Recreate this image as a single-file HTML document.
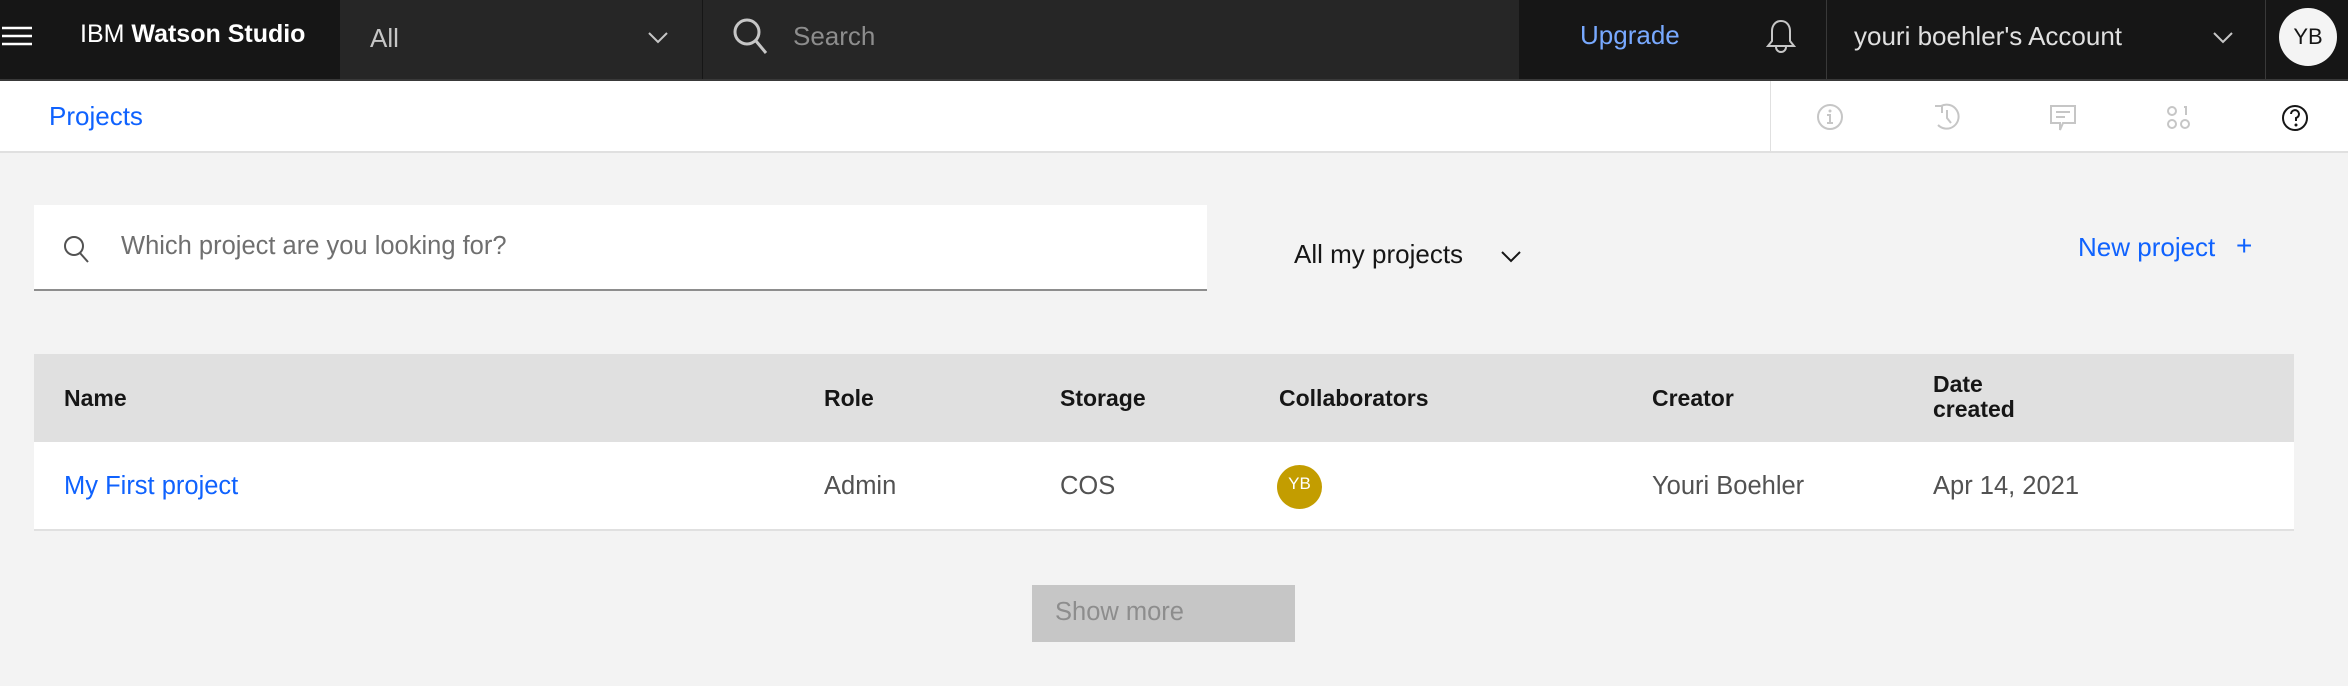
<!DOCTYPE html>
<html><head><meta charset="utf-8"><style>
*{margin:0;padding:0;box-sizing:border-box}
body{width:2348px;height:686px;background:#f3f3f3;font-family:"Liberation Sans",sans-serif;position:relative;overflow:hidden}
.a{position:absolute;white-space:nowrap}
</style></head><body>
<div class="a" style="left:0;top:0;width:2348px;height:80px;background:#161616"></div>
<div class="a" style="left:340px;top:0;width:1179px;height:80px;background:#262626"></div>
<div class="a" style="left:702px;top:0;width:1px;height:80px;background:#161616"></div>
<div class="a" style="left:1826px;top:0;width:1px;height:80px;background:#393939"></div>
<div class="a" style="left:2265px;top:0;width:1px;height:80px;background:#393939"></div>
<div class="a" style="left:0;top:79px;width:2348px;height:2px;background:#393939"></div>
<svg class="a" style="left:2px;top:24px" width="32" height="26"><g stroke="#fff" stroke-width="2.5"><line x1="0" y1="4" x2="30" y2="4"/><line x1="0" y1="12" x2="30" y2="12"/><line x1="0" y1="20" x2="30" y2="20"/></g></svg>
<div class="a" style="left:80px;top:20px;color:#fff;font-size:25px">IBM <b>Watson Studio</b></div>
<div class="a" style="left:370px;top:23px;color:#c6c6c6;font-size:26px">All</div>
<svg class="a" style="left:647px;top:30px" width="22" height="14"><path d="M2 3l9 9 9-9" stroke="#c6c6c6" stroke-width="2" fill="none"/></svg>
<svg class="a" style="left:731px;top:16px" width="42" height="42"><circle cx="16" cy="16" r="12" stroke="#c6c6c6" stroke-width="3" fill="none"/><line x1="25" y1="25" x2="35" y2="37" stroke="#c6c6c6" stroke-width="3"/></svg>
<div class="a" style="left:793px;top:21px;color:#8d8d8d;font-size:26px">Search</div>
<div class="a" style="left:1580px;top:20px;color:#78a9ff;font-size:26px">Upgrade</div>
<svg class="a" style="left:1764px;top:18px" width="34" height="38"><path d="M17 3c-6 0-9 5-9 10v10l-4 5h26l-4-5V13c0-5-3-10-9-10z" stroke="#c6c6c6" stroke-width="2" fill="none"/><path d="M12 29a5 5 0 0 0 10 0" stroke="#c6c6c6" stroke-width="2" fill="none"/></svg>
<div class="a" style="left:1854px;top:21px;color:#e0e0e0;font-size:26px">youri boehler's Account</div>
<svg class="a" style="left:2212px;top:30px" width="22" height="14"><path d="M2 3l9 9 9-9" stroke="#c6c6c6" stroke-width="2" fill="none"/></svg>
<div class="a" style="left:2279px;top:8px;width:58px;height:58px;border-radius:50%;background:#f4f4f4;color:#161616;font-size:22px;text-align:center;line-height:58px">YB</div>
<div class="a" style="left:0;top:81px;width:2348px;height:72px;background:#fff;border-bottom:2px solid #e0e0e0"></div>
<div class="a" style="left:1770px;top:81px;width:1px;height:72px;background:#e0e0e0"></div>
<div class="a" style="left:49px;top:101px;color:#0f62fe;font-size:26px">Projects</div>
<svg class="a" style="left:1815px;top:102px" width="30" height="30"><circle cx="15" cy="15" r="12" stroke="#c6c6c6" stroke-width="2" fill="none"/><circle cx="15" cy="9" r="1.5" fill="#c6c6c6"/><path d="M12 13h3v8M12 21h6" stroke="#c6c6c6" stroke-width="2" fill="none"/></svg>
<svg class="a" style="left:1932px;top:102px" width="30" height="30"><path d="M9 4A12 12 0 1 1 6 23" stroke="#c6c6c6" stroke-width="2" fill="none"/><path d="M15 8v8l4 5" stroke="#c6c6c6" stroke-width="2" fill="none"/><path d="M3 4h7v7" stroke="#c6c6c6" stroke-width="2" fill="none"/></svg>
<svg class="a" style="left:2048px;top:103px" width="30" height="30"><path d="M3 3h24v17H15l-3 7v-7H3z" stroke="#c6c6c6" stroke-width="2" fill="none"/><path d="M8 9h14M8 14h9" stroke="#c6c6c6" stroke-width="2"/></svg>
<svg class="a" style="left:2164px;top:103px" width="30" height="30"><g stroke="#c6c6c6" stroke-width="2" fill="none"><circle cx="8" cy="8" r="4"/><path d="M20 4h2v8"/><circle cx="8" cy="21" r="4"/><circle cx="21" cy="21" r="4"/></g></svg>
<svg class="a" style="left:2280px;top:103px" width="30" height="30"><circle cx="15" cy="15" r="12" stroke="#161616" stroke-width="2" fill="none"/><path d="M11 11a4 4 0 1 1 5 4v3" stroke="#161616" stroke-width="2" fill="none"/><circle cx="16" cy="22" r="1.5" fill="#161616"/></svg>
<div class="a" style="left:34px;top:205px;width:1173px;height:86px;background:#fff;border-bottom:2px solid #8d8d8d"></div>
<svg class="a" style="left:62px;top:234px" width="30" height="32"><circle cx="12" cy="12" r="9" stroke="#525252" stroke-width="2" fill="none"/><line x1="18" y1="19" x2="26" y2="28" stroke="#525252" stroke-width="2"/></svg>
<div class="a" style="left:121px;top:232px;color:#6f6f6f;font-size:25.5px">Which project are you looking for?</div>
<div class="a" style="left:1294px;top:239px;color:#161616;font-size:26px">All my projects</div>
<svg class="a" style="left:1500px;top:249px" width="22" height="14"><path d="M2 3l9 9 9-9" stroke="#161616" stroke-width="2" fill="none"/></svg>
<div class="a" style="left:2078px;top:232px;color:#0f62fe;font-size:26px">New project</div>
<div class="a" style="left:2236px;top:230px;color:#0f62fe;font-size:28px">+</div>
<div class="a" style="left:34px;top:354px;width:2260px;height:88px;background:#e0e0e0"></div>
<div class="a" style="left:34px;top:442px;width:2260px;height:89px;background:#fff;border-bottom:2px solid #e0e0e0"></div>
<div class="a" style="left:64px;top:385px;font-size:23px;font-weight:bold;color:#161616">Name</div>
<div class="a" style="left:824px;top:385px;font-size:23px;font-weight:bold;color:#161616">Role</div>
<div class="a" style="left:1060px;top:385px;font-size:23px;font-weight:bold;color:#161616">Storage</div>
<div class="a" style="left:1279px;top:385px;font-size:23px;font-weight:bold;color:#161616">Collaborators</div>
<div class="a" style="left:1652px;top:385px;font-size:23px;font-weight:bold;color:#161616">Creator</div>
<div class="a" style="left:1933px;top:372px;font-size:23px;font-weight:bold;color:#161616;line-height:25px">Date<br>created</div>
<div class="a" style="left:64px;top:472px;font-size:25.5px;color:#0f62fe">My First project</div>
<div class="a" style="left:824px;top:472px;font-size:25.5px;color:#525252">Admin</div>
<div class="a" style="left:1060px;top:472px;font-size:25.5px;color:#525252">COS</div>
<div class="a" style="left:1277px;top:465px;width:45px;height:44px;border-radius:50%;background:#c39d00;color:#fff;font-size:17px;text-align:center;line-height:38px">YB</div>
<div class="a" style="left:1652px;top:472px;font-size:25.5px;color:#525252">Youri Boehler</div>
<div class="a" style="left:1933px;top:472px;font-size:25.5px;color:#525252">Apr 14, 2021</div>
<div class="a" style="left:1032px;top:585px;width:263px;height:57px;background:#c6c6c6;color:#8d8d8d;font-size:25.5px;padding:13px 0 0 23px">Show more</div>
</body></html>
